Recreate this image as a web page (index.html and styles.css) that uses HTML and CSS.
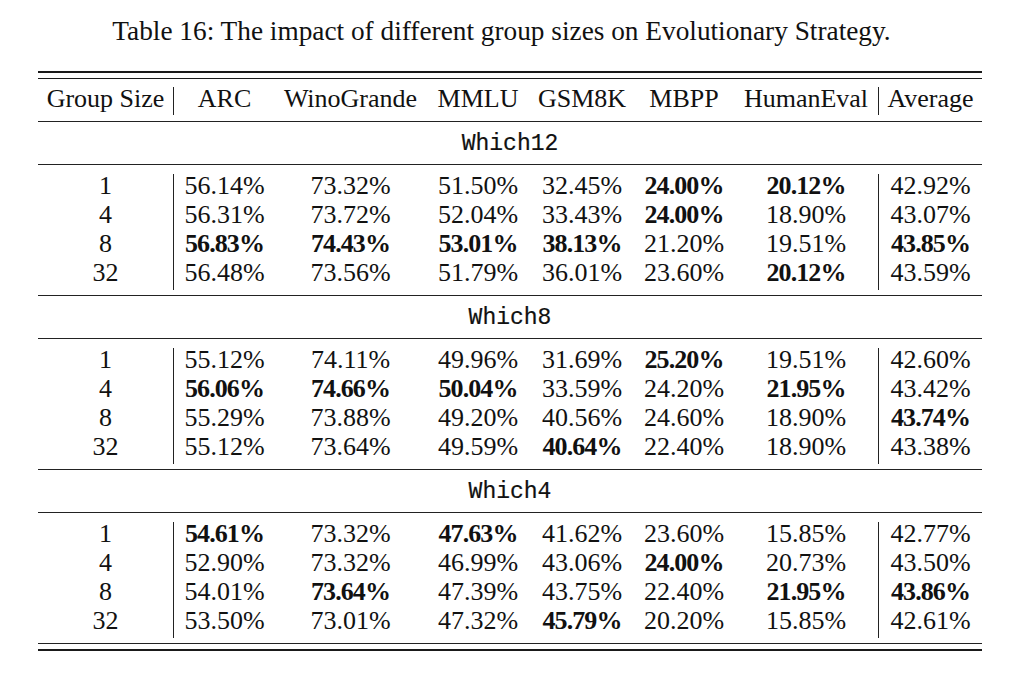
FILE: index.html
```html
<!DOCTYPE html>
<html lang="en">
<head>
<meta charset="utf-8">
<title>Table 16</title>
<link rel="stylesheet" href="styles.css">
</head>
<body>
<div class="page">
  <p class="caption">Table 16: The impact of different group sizes on Evolutionary Strategy.</p>
  <div class="tbl">
    <div class="toprule"></div>
    <div class="sec head grid">
      <div class="cell">Group Size</div>
      <div class="cell bl">ARC</div>
      <div class="cell">WinoGrande</div>
      <div class="cell">MMLU</div>
      <div class="cell">GSM8K</div>
      <div class="cell">MBPP</div>
      <div class="cell">HumanEval</div>
      <div class="cell bl">Average</div>
    </div>

    <div class="sec group">Which12</div>
    <div class="sec data grid">
      <div class="cell">1</div><div class="cell bl">56.14%</div><div class="cell">73.32%</div><div class="cell">51.50%</div><div class="cell">32.45%</div><div class="cell b">24.00%</div><div class="cell b">20.12%</div><div class="cell bl">42.92%</div>
      <div class="cell">4</div><div class="cell bl">56.31%</div><div class="cell">73.72%</div><div class="cell">52.04%</div><div class="cell">33.43%</div><div class="cell b">24.00%</div><div class="cell">18.90%</div><div class="cell bl">43.07%</div>
      <div class="cell">8</div><div class="cell bl b">56.83%</div><div class="cell b">74.43%</div><div class="cell b">53.01%</div><div class="cell b">38.13%</div><div class="cell">21.20%</div><div class="cell">19.51%</div><div class="cell bl b">43.85%</div>
      <div class="cell">32</div><div class="cell bl">56.48%</div><div class="cell">73.56%</div><div class="cell">51.79%</div><div class="cell">36.01%</div><div class="cell">23.60%</div><div class="cell b">20.12%</div><div class="cell bl">43.59%</div>
    </div>

    <div class="sec group">Which8</div>
    <div class="sec data grid">
      <div class="cell">1</div><div class="cell bl">55.12%</div><div class="cell">74.11%</div><div class="cell">49.96%</div><div class="cell">31.69%</div><div class="cell b">25.20%</div><div class="cell">19.51%</div><div class="cell bl">42.60%</div>
      <div class="cell">4</div><div class="cell bl b">56.06%</div><div class="cell b">74.66%</div><div class="cell b">50.04%</div><div class="cell">33.59%</div><div class="cell">24.20%</div><div class="cell b">21.95%</div><div class="cell bl">43.42%</div>
      <div class="cell">8</div><div class="cell bl">55.29%</div><div class="cell">73.88%</div><div class="cell">49.20%</div><div class="cell">40.56%</div><div class="cell">24.60%</div><div class="cell">18.90%</div><div class="cell bl b">43.74%</div>
      <div class="cell">32</div><div class="cell bl">55.12%</div><div class="cell">73.64%</div><div class="cell">49.59%</div><div class="cell b">40.64%</div><div class="cell">22.40%</div><div class="cell">18.90%</div><div class="cell bl">43.38%</div>
    </div>

    <div class="sec group">Which4</div>
    <div class="sec data grid">
      <div class="cell">1</div><div class="cell bl b">54.61%</div><div class="cell">73.32%</div><div class="cell b">47.63%</div><div class="cell">41.62%</div><div class="cell">23.60%</div><div class="cell">15.85%</div><div class="cell bl">42.77%</div>
      <div class="cell">4</div><div class="cell bl">52.90%</div><div class="cell">73.32%</div><div class="cell">46.99%</div><div class="cell">43.06%</div><div class="cell b">24.00%</div><div class="cell">20.73%</div><div class="cell bl">43.50%</div>
      <div class="cell">8</div><div class="cell bl">54.01%</div><div class="cell b">73.64%</div><div class="cell">47.39%</div><div class="cell">43.75%</div><div class="cell">22.40%</div><div class="cell b">21.95%</div><div class="cell bl b">43.86%</div>
      <div class="cell">32</div><div class="cell bl">53.50%</div><div class="cell">73.01%</div><div class="cell">47.32%</div><div class="cell b">45.79%</div><div class="cell">20.20%</div><div class="cell">15.85%</div><div class="cell bl">42.61%</div>
    </div>
    <div class="bottomrule"></div>
  </div>
</div>
</body>
</html>
```

FILE: styles.css
```css
html, body {
  margin: 0;
  padding: 0;
  background: #ffffff;
}

.page {
  width: 1015px;
  font-family: "Liberation Serif", "Times New Roman", serif;
  font-size: 26px;
  color: #111111;
}

.caption {
  margin: 0 0 24px 0;
  padding: 16px 12px 0 0;
  font-size: 27.3px;
  line-height: 31px;
  text-align: center;
}

.tbl {
  margin-left: 38px;
  width: 944px;
}

.toprule {
  height: 5px;
  border-top: 2px solid #1a1a1a;
  border-bottom: 1px solid #1a1a1a;
}

.sec {
  border-bottom: 1px solid #222222;
}

.grid {
  display: grid;
  grid-template-columns: 135px 102px 151px 104px 104px 100px 144px 104px;
}

.cell {
  text-align: center;
  white-space: nowrap;
  line-height: 23px;
  padding-bottom: 6px;
}

.head {
  padding: 8px 0 6px 0;
}

.head .cell {
  padding-bottom: 5px;
}

.data {
  padding: 9px 0 5px 0;
}

.bl {
  border-left: 1px solid #222222;
}

.b {
  font-weight: bold;
  letter-spacing: -0.9px;
}

.group {
  height: 40px;
  padding-top: 2px;
  display: flex;
  align-items: center;
  justify-content: center;
  font-family: "Liberation Mono", "Courier New", monospace;
  font-size: 23px;
  -webkit-text-stroke: 0.2px #111111;
}

.bottomrule {
  height: 5px;
  border-bottom: 2px solid #1a1a1a;
}
```
